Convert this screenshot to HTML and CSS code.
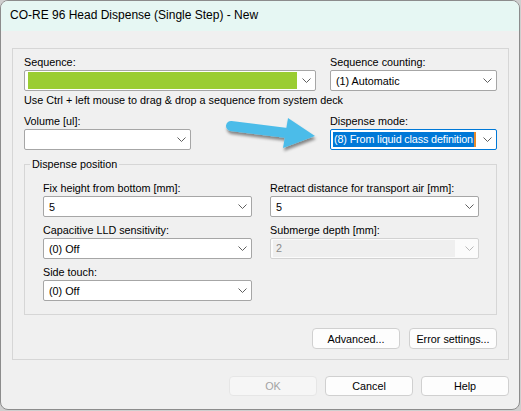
FILE: index.html
```html
<!DOCTYPE html>
<html>
<head>
<meta charset="utf-8">
<link rel="stylesheet" href="styles.css">
</head>
<body>
<div class="window">
  <div class="titlebar">CO-RE 96 Head Dispense (Single Step) - New</div>
  <div class="client">
    <div class="group">
      <div class="cols">
        <div class="field">
          <div class="label">Sequence:</div>
          <div class="combo"><span class="green"></span><svg class="chev" viewBox="0 0 9 5"><polyline points="0.5,0.5 4.5,4.5 8.5,0.5"/></svg></div>
        </div>
        <div class="field">
          <div class="label">Sequence counting:</div>
          <div class="combo"><span class="val">(1) Automatic</span><svg class="chev" viewBox="0 0 9 5"><polyline points="0.5,0.5 4.5,4.5 8.5,0.5"/></svg></div>
        </div>
      </div>
      <div class="hint">Use Ctrl + left mouse to drag &amp; drop a sequence from system deck</div>
      <div class="cols row2">
        <div class="field">
          <div class="label">Volume [ul]:</div>
          <div class="combo narrow"><span class="val"></span><svg class="chev" viewBox="0 0 9 5"><polyline points="0.5,0.5 4.5,4.5 8.5,0.5"/></svg></div>
        </div>
        <div class="field">
          <div class="label">Dispense mode:</div>
          <div class="combo focused"><span class="sel">(8) From liquid class definition</span><span class="caret"></span><svg class="chev" viewBox="0 0 9 5"><polyline points="0.5,0.5 4.5,4.5 8.5,0.5"/></svg></div>
        </div>
      </div>
      <fieldset class="pos">
        <legend>Dispense position</legend>
        <div class="grid">
          <div class="field">
            <div class="label">Fix height from bottom [mm]:</div>
            <div class="combo"><span class="val">5</span><svg class="chev" viewBox="0 0 9 5"><polyline points="0.5,0.5 4.5,4.5 8.5,0.5"/></svg></div>
          </div>
          <div class="field">
            <div class="label">Retract distance for transport air [mm]:</div>
            <div class="combo"><span class="val">5</span><svg class="chev" viewBox="0 0 9 5"><polyline points="0.5,0.5 4.5,4.5 8.5,0.5"/></svg></div>
          </div>
          <div class="field">
            <div class="label">Capacitive LLD sensitivity:</div>
            <div class="combo"><span class="val">(0) Off</span><svg class="chev" viewBox="0 0 9 5"><polyline points="0.5,0.5 4.5,4.5 8.5,0.5"/></svg></div>
          </div>
          <div class="field">
            <div class="label">Submerge depth [mm]:</div>
            <div class="combo disabled"><span class="val">2</span><svg class="chev" viewBox="0 0 9 5"><polyline points="0.5,0.5 4.5,4.5 8.5,0.5"/></svg></div>
          </div>
          <div class="field">
            <div class="label">Side touch:</div>
            <div class="combo"><span class="val">(0) Off</span><svg class="chev" viewBox="0 0 9 5"><polyline points="0.5,0.5 4.5,4.5 8.5,0.5"/></svg></div>
          </div>
        </div>
      </fieldset>
      <div class="btnrow">
        <button class="btn">Advanced...</button>
        <button class="btn">Error settings...</button>
      </div>
    </div>
    <div class="dlgbtns">
      <button class="btn off">OK</button>
      <button class="btn">Cancel</button>
      <button class="btn">Help</button>
    </div>
  </div>
  <svg class="arrow" viewBox="0 0 110 50" width="110" height="50">
    <defs>
      <filter id="sh" x="-20%" y="-20%" width="140%" height="160%">
        <feGaussianBlur in="SourceAlpha" stdDeviation="1.5"/>
        <feOffset dx="1" dy="3" result="b"/>
        <feComponentTransfer><feFuncA type="linear" slope="0.45"/></feComponentTransfer>
        <feMerge><feMergeNode/><feMergeNode in="SourceGraphic"/></feMerge>
      </filter>
    </defs>
    <g filter="url(#sh)" fill="#4cbce9">
      <line x1="12" y1="14" x2="68" y2="21" stroke="#4cbce9" stroke-width="10" stroke-linecap="round"/>
      <polygon points="69,6 96,24 64,36"/>
    </g>
  </svg>
</div>
</body>
</html>
```

FILE: styles.css
```css
html, body {
  margin: 0;
  padding: 0;
}
body {
  background: #cfcfcf;
  font-family: "Liberation Sans", Arial, sans-serif;
  font-size: 10.8px;
  color: #000;
}
.window {
  position: relative;
  box-sizing: border-box;
  width: 520px;
  height: 410px;
  background: #f0f0f0;
  border: 1px solid #8c8c8c;
  border-radius: 8px;
  overflow: hidden;
}
.titlebar {
  height: 30px;
  background: #e6f7f3;
  padding-left: 9px;
  line-height: 29px;
  font-size: 12px;
}
.client {
  padding: 17px 10px 0 11px;
}
.group {
  border: 1px solid #d6d6d6;
  padding: 6px 11px 10px 11px;
  width: 473px;
}
.cols {
  display: grid;
  grid-template-columns: 292px 167px;
  column-gap: 14px;
}
.row2 {
  margin-top: 6px;
}
.label {
  height: 15px;
  line-height: 15px;
  white-space: nowrap;
}
.hint {
  margin-top: 2px;
  height: 15px;
  line-height: 15px;
  white-space: nowrap;
}
.combo {
  box-sizing: border-box;
  height: 21px;
  background: #fff;
  border: 1px solid #a6a6a6;
  border-radius: 2px;
  display: flex;
  align-items: center;
  padding-left: 5px;
  padding-right: 4px;
}
.combo.narrow {
  width: 167px;
}
.val {
  flex: 1;
  white-space: nowrap;
}
.green {
  flex: 1;
  align-self: stretch;
  margin: 1px 5px 1px -2px;
  background: #9acd32;
}
.chev {
  width: 9px;
  height: 5px;
  flex: none;
}
.chev polyline {
  fill: none;
  stroke: #5f5f5f;
  stroke-width: 1;
}
.combo.focused {
  border-color: #0078d7;
  padding-left: 2px;
}
.sel {
  background: #0078d7;
  color: #fff;
  height: 15px;
  line-height: 15px;
  padding: 0 1px;
  white-space: nowrap;
  letter-spacing: -0.14px;
}
.caret {
  width: 2px;
  height: 15px;
  background: #e88a2a;
  flex: none;
  margin-right: auto;
}
.combo.disabled {
  background: #fbfbfb;
  border-color: #d2d2d2;
  color: #8a8a8a;
}
.combo.disabled .val {
  background: #efefef;
  align-self: stretch;
  line-height: 17px;
  margin: 1px 10px 1px -3px;
  padding-left: 3px;
}
.combo.disabled .chev polyline {
  stroke: #b8b8b8;
}
.pos {
  margin: 7px 0 0 0;
  padding: 9px 17px 13px 18px;
  border: 1px solid #d6d6d6;
  min-width: 0;
}
.pos legend {
  padding: 0 2px;
  margin-left: -13px;
  height: 15px;
  line-height: 15px;
}
.grid {
  display: grid;
  grid-template-columns: 209px 209px;
  column-gap: 18px;
  row-gap: 6px;
}
.btnrow {
  margin-top: 13px;
  display: flex;
  justify-content: flex-end;
  gap: 9px;
}
.btn {
  box-sizing: border-box;
  width: 88px;
  height: 21px;
  background: #fdfdfd;
  border: 1px solid #d0d0d0;
  border-radius: 4px;
  font-family: "Liberation Sans", Arial, sans-serif;
  font-size: 10.8px;
  color: #000;
  padding: 0;
}
.btn.off {
  background: #f6f6f6;
  border-color: #e6e6e6;
  color: #a3a3a3;
}
.dlgbtns {
  margin-top: 16px;
  display: flex;
  justify-content: flex-end;
  gap: 8px;
}
.dlgbtns .btn {
  height: 20px;
}
.arrow {
  position: absolute;
  left: 218px;
  top: 111px;
}
```
